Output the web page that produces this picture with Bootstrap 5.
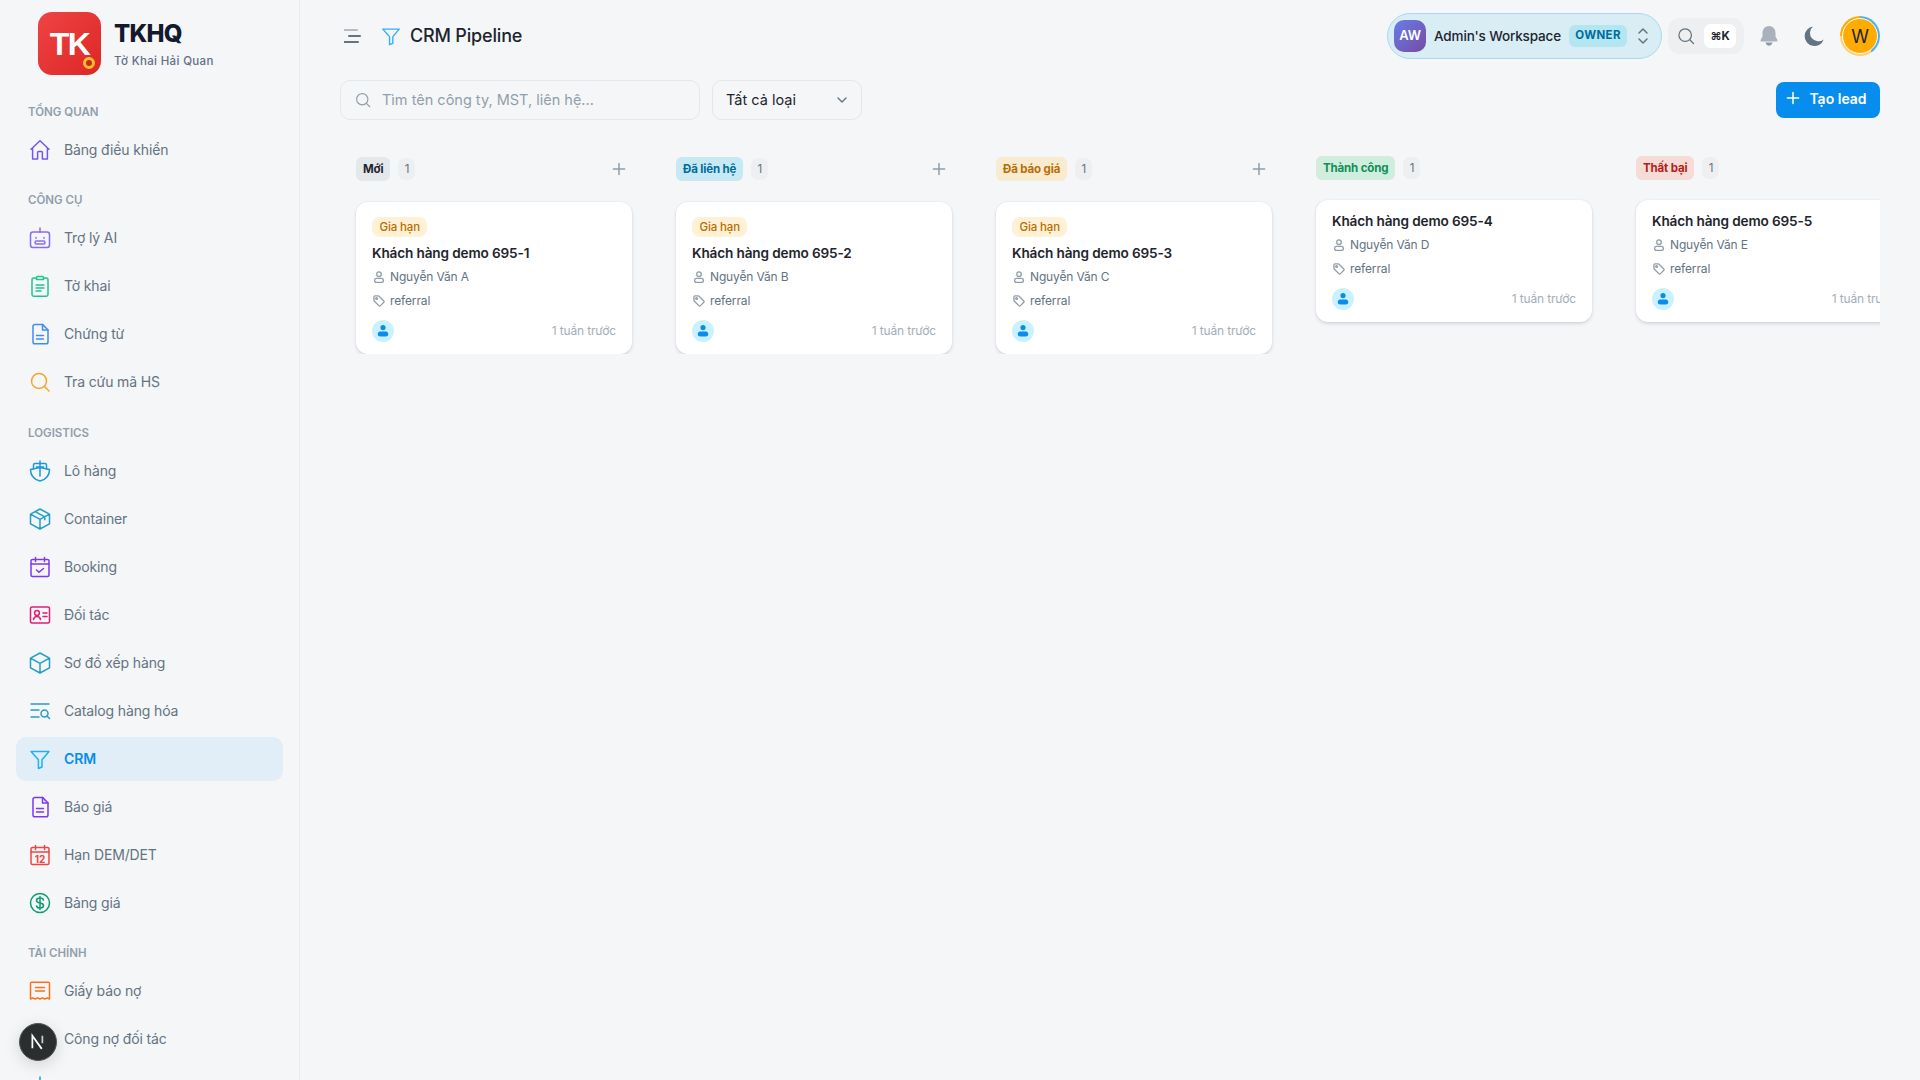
<!DOCTYPE html>
<html lang="vi">
<head>
<meta charset="utf-8">
<title>CRM Pipeline</title>
<link rel="stylesheet" href="https://cdn.jsdelivr.net/npm/bootstrap@5.3.0/dist/css/bootstrap.min.css">
<style>
    html, body { height: 100%; }
    body {
        font-family: Inter, "Noto Sans", sans-serif;
        background: #f5f6f8;
        color: #1c252e;
        font-size: 14px;
        overflow: hidden;
        letter-spacing: -0.01em;
    }
    .app-shell { height: 1080px; }
    .side-bar {
        width: 300px;
        border-right: 1px solid #e9ecef;
        height: 1080px;
        overflow: hidden;
    }
    .brand-row { height: 83.7px; padding: 12px 0 0 38px; gap: 13px; }
    .brand-logo {
        position: relative;
        width: 63px; height: 63px;
        border-radius: 14px;
        background: linear-gradient(135deg, #ef4444, #dc2626);
        color: #fff;
        font: 700 32px/65px "Liberation Sans", sans-serif;
        letter-spacing: -1.5px;
        text-align: center;
    }
    .brand-dot {
        position: absolute;
        right: 6px; bottom: 6px;
        width: 12px; height: 12px;
        border-radius: 50%;
        background: #c62828;
        border: 3.5px solid #fbbf24;
    }
    .brand-name { font-size: 24px; font-weight: 800; color: #141a2e; line-height: 28px; margin-top: 8px; letter-spacing: -0.03em; }
    .brand-sub { font-size: 11.5px; color: #5f6f86; letter-spacing: 0.35px; margin-top: 5px; line-height: 16px; font-weight: 500; }
    .nav-label {
        font-size: 11.5px;
        font-weight: 600;
        color: #919eab;
        height: 20px;
        line-height: 20px;
        margin: 18px 0 6px 28px;
        text-transform: uppercase;
        letter-spacing: 0;
    }
    .nav-label.wide-top { margin-top: 19px; }
    .nav-row {
        display: flex;
        align-items: center;
        gap: 12px;
        height: 44px;
        margin: 0 16px 4px 16px;
        padding-left: 12px;
        border-radius: 10px;
        color: #637381;
        font-size: 14px;
        text-decoration: none;
    }
    .nav-row svg { width: 24px; height: 24px; flex: none; }
    .nav-row.is-active { background: #e1eef8; color: #078dee; font-weight: 600; }
    .ico { fill: none; stroke: currentColor; stroke-width: 1.5; stroke-linecap: round; stroke-linejoin: round; }

    .next-badge {
        position: absolute;
        left: 19px; top: 1023px;
        width: 38px; height: 38px;
        border-radius: 50%;
        background: #2b2e2e;
        border: 1px solid #555;
        box-shadow: 0 4px 16px rgba(0,0,0,.14);
        color: #fff;
    }

    .work-area { min-width: 0; padding: 0 40px; }
    .top-bar { height: 72px; }
    .page-title { font-size: 18px; font-weight: 500; margin: 0; letter-spacing: -0.01em; color: #1c252e; }
    .ws-pill {
        height: 46px;
        width: 275px;
        padding: 0 12px 0 6px;
        border-radius: 23px;
        background: #d9edf5;
        border: 1px solid #a3daf3;
    }
    .ws-avatar {
        width: 32px; height: 32px;
        border-radius: 10px;
        background: linear-gradient(135deg, #667eea, #764ba2);
        color: #fff;
        font-size: 13px;
        font-weight: 600;
    }
    .ws-name { font-size: 13.5px; font-weight: 500; margin-left: 8px; }
    .ws-role {
        margin-left: 8px;
        width: 58px; height: 22px;
        border-radius: 6px;
        background: #b4e6f1;
        color: #006c9c;
        font-size: 11.5px;
        font-weight: 700;
        letter-spacing: 0.03em;
    }
    .cmd-box { width: 76px; height: 36px; border-radius: 12px; background: #edeff1; margin-left: 6px; padding: 0 8px 0 8px; }
    .cmd-key {
        width: 32px; height: 24px;
        border-radius: 7px;
        background: #fff;
        font: 700 11.5px/24px Inter, sans-serif;
        text-align: center;
        color: #1c252e;
    }
    .user-ring {
        width: 40px; height: 40px;
        border-radius: 50%;
        padding: 2px;
        background: conic-gradient(#4fb3f0 0 40%, #ffd27a 40% 75%, #ffab00 75% 100%);
    }
    .user-face {
        width: 100%; height: 100%;
        border-radius: 50%;
        background: #ffab00;
        border: 1px solid #fff;
        color: #1c252e;
        font-size: 18px;
    }
    .tool-row { height: 40px; margin-top: 8px; }
    .find-box {
        width: 360px; height: 40px;
        border: 1px solid #e3e7eb;
        border-radius: 10px;
        padding: 0 13px;
        gap: 10px;
        color: #919eab;
        font-size: 14.5px;
        letter-spacing: 0;
    }
    .kind-box {
        width: 150px; height: 40px;
        margin-left: 12px;
        border: 1px solid #e3e7eb;
        border-radius: 10px;
        padding: 0 12px 0 13px;
        font-size: 14.5px;
        letter-spacing: 0;
        color: #1c252e;
    }
    .add-lead {
        width: 104px; height: 36px;
        border-radius: 8px;
        background: #078dee;
        border: 0;
        color: #fff;
        font-size: 14px;
        font-weight: 600;
    }
    .add-lead:hover { background: #0379d0; color: #fff; }

    .board { gap: 44px; padding: 35px 0 0 16px; overflow: hidden; }
    .stage { width: 276px; flex: none; }
    .stage-head { min-height: 26px; margin-bottom: 19px; gap: 8px; }
    .stage-tag {
        height: 24px;
        padding: 0 7px;
        border-radius: 6px;
        font-size: 11.5px;
        font-weight: 700;
        line-height: 24px;
    }
    .stage-num {
        width: 17px; height: 22px;
        border-radius: 7px;
        background: #edeff1;
        color: #637381;
        font-size: 11.5px;
        text-align: center;
        line-height: 22px;
    }
    .stage-add { width: 28px; height: 28px; color: #919eab; margin-right: -1px; }
    .tag-grey { background: #e5e8eb; color: #1c252e; }
    .tag-blue { background: #c6e9f4; color: #006c9c; }
    .tag-amber { background: #f9ebd0; color: #b76e00; }
    .tag-green { background: #d0eedd; color: #118d57; }
    .tag-red { background: #f6dcd7; color: #b71d18; }

    .lead-card {
        background: #fff;
        border-radius: 12px;
        padding: 12px 16px;
        box-shadow: 0 0 2px rgba(145,158,171,.2), 0 2px 4px -1px rgba(145,158,171,.45);
    }
    .lead-kind {
        display: inline-block;
        height: 20px;
        padding: 0 7.5px;
        margin: 3px 0 7px;
        border-radius: 8px;
        background: #fff1d6;
        color: #b76e00;
        font-size: 11.5px;
        font-weight: 500;
        line-height: 20px;
        vertical-align: top;
    }
    .lead-title { font-size: 13.6px; font-weight: 600; line-height: 18px; color: #1c252e; margin: 0 0 3px; }
    .lead-meta { height: 24px; gap: 4px; font-size: 12px; color: #637381; }
    .lead-meta svg { width: 14px; height: 14px; color: #919eab; flex: none; }
    .lead-foot { margin-top: 7px; }
    .lead-owner { width: 22px; height: 22px; border-radius: 50%; background: #caf1ff; }
    .lead-time { font-size: 12px; color: #a3aeb9; }
</style>
</head>
<body>
<svg width="0" height="0" class="position-absolute">
    <symbol id="i-user" viewBox="0 0 16 16"><circle cx="8" cy="4.8" r="2.6" class="ico" stroke-width="1"/><rect x="3" y="9.6" width="10" height="4.6" rx="2.3" class="ico" stroke-width="1"/></symbol>
    <symbol id="i-tag" viewBox="0 0 16 16"><path class="ico" stroke-width="1" d="M2.2 7V3.4c0-.7.5-1.2 1.2-1.2H7c.4 0 .7.1 1 .4l5.3 5.2c.6.6.6 1.3 0 1.9l-3.6 3.6c-.6.6-1.3.6-1.9 0L2.6 8c-.3-.3-.4-.6-.4-1z"/><circle cx="5.2" cy="5.2" r="1" class="ico" stroke-width="1"/></symbol>
    <symbol id="i-person" viewBox="0 0 22 22"><circle cx="11" cy="7.6" r="2.6" fill="#078dee"/><rect x="5.8" y="11.6" width="10.4" height="5" rx="2.5" fill="#078dee"/></symbol>
    <symbol id="i-plus" viewBox="0 0 16 16"><path d="M8 2.4v11.2M2.4 8h11.2" fill="none" stroke="currentColor" stroke-width="1.5" stroke-linecap="round"/></symbol>
    <symbol id="i-funnel" viewBox="0 0 24 24"><path class="ico" d="M3 4.5h18l-7 8.2V20l-3.6 1.5v-8.8z"/></symbol>
    <symbol id="i-search" viewBox="0 0 24 24"><circle cx="11" cy="11" r="7.5" class="ico"/><path class="ico" d="M16.5 16.5 21 21"/></symbol>
    <symbol id="i-doc" viewBox="0 0 24 24"><path class="ico" d="M5 4.2C5 3 5.8 2.4 7 2.4h7.5L20 8v12c0 1-.8 1.8-1.8 1.8H6.8C5.8 21.8 5 21 5 20z"/><path class="ico" d="M14.5 2.4V8H20M8.5 13.5h7M8.5 17h7"/></symbol>
</svg>

<div class="app-shell d-flex">
    <aside class="side-bar flex-shrink-0">
        <div class="brand-row d-flex align-items-start">
            <div class="brand-logo">TK<span class="brand-dot"></span></div>
            <div>
                <div class="brand-name">TKHQ</div>
                <div class="brand-sub">Tờ Khai Hải Quan</div>
            </div>
        </div>

        <div class="nav-label">Tổng quan</div>
        <a class="nav-row" href="#"><svg viewBox="0 0 24 24" style="color:#7357f0"><path class="ico" d="M3 11.2 12 2.8l9 8.4M4.6 9.8V21h5v-6.4c0-.6.4-1 1-1h2.8c.6 0 1 .4 1 1V21h5V9.8"/></svg>Bảng điều khiển</a>

        <div class="nav-label">Công cụ</div>
        <a class="nav-row" href="#"><svg viewBox="0 0 24 24" style="color:#8b6cf6"><rect x="2.5" y="6" width="19" height="15.5" rx="2.5" class="ico"/><path class="ico" d="M12 2v4M8 11.5v.8M16 11.5v.8"/><rect x="7" y="15" width="10" height="3" rx="1.5" class="ico"/></svg>Trợ lý AI</a>
        <a class="nav-row" href="#"><svg viewBox="0 0 24 24" style="color:#22c58b"><path class="ico" d="M8.5 4H5.6C4.7 4 4 4.7 4 5.6v15c0 .9.7 1.6 1.6 1.6h12.8c.9 0 1.6-.7 1.6-1.6v-15c0-.9-.7-1.6-1.6-1.6h-2.9"/><path class="ico" d="M8.5 3.8c0-.7.5-1.3 1.2-1.3h4.6c.7 0 1.2.6 1.2 1.3v1.7h-7zM8 11h8M8 14h8M8 17h5"/></svg>Tờ khai</a>
        <a class="nav-row" href="#"><svg viewBox="0 0 24 24" style="color:#3f8cf4"><use href="#i-doc"/></svg>Chứng từ</a>
        <a class="nav-row" href="#"><svg viewBox="0 0 24 24" style="color:#f5a524"><use href="#i-search"/></svg>Tra cứu mã HS</a>

        <div class="nav-label wide-top">Logistics</div>
        <a class="nav-row" href="#"><svg viewBox="0 0 24 24" style="color:#1b9ad6"><path class="ico" d="M5.5 10V6c0-.8.7-1.5 1.5-1.5h10c.8 0 1.5.7 1.5 1.5v4"/><path class="ico" d="M2.5 10.5 12 8.5l9.5 2c0 5-1.5 9.5-9.5 11.5-8-2-9.5-6.5-9.5-11.5zM12 2v15M8.5 8h7"/></svg>Lô hàng</a>
        <a class="nav-row" href="#"><svg viewBox="0 0 24 24" style="color:#22a0c4"><path class="ico" d="M12 2 21.5 7.200v9.600L12 22l-9.500-5.200V7.200zM2.500 7.200 12 12.400l9.500-5.200M12 12.400V22M7.200 4.600l9.600 5.200v3"/></svg>Container</a>
        <a class="nav-row" href="#"><svg viewBox="0 0 24 24" style="color:#7c3aed"><rect x="3" y="4.5" width="18" height="17" rx="1.5" class="ico"/><path class="ico" d="M3 9h18M7.5 2.5v4M16.5 2.5v4M8.5 15l2.5 2.300 4.500-3.800"/></svg>Booking</a>
        <a class="nav-row" href="#"><svg viewBox="0 0 24 24" style="color:#e11d74"><rect x="2.5" y="4" width="19" height="16" rx="1.5" class="ico"/><circle cx="9" cy="10" r="2.4" class="ico"/><path class="ico" d="M5.500 16.500c.4-2 1.800-3 3.500-3s3.100 1 3.500 3M15 10h4M15 13.500h4"/></svg>Đối tác</a>
        <a class="nav-row" href="#"><svg viewBox="0 0 24 24" style="color:#22a0c4"><path class="ico" d="M12 2 21.500 7.200v9.600L12 22l-9.500-5.200V7.200zM2.500 7.200 12 12.400l9.500-5.200M12 12.400V22"/></svg>Sơ đồ xếp hàng</a>
        <a class="nav-row" href="#"><svg viewBox="0 0 24 24" style="color:#2a9dc4"><path class="ico" d="M3 5h18M3 11h8M3 18h8"/><circle cx="16.5" cy="14.5" r="3.5" class="ico"/><path class="ico" d="m19 17 2.5 2.500"/></svg>Catalog hàng hóa</a>
        <a class="nav-row is-active" href="#"><svg viewBox="0 0 24 24" style="color:#1fb0f5"><use href="#i-funnel"/></svg>CRM</a>
        <a class="nav-row" href="#"><svg viewBox="0 0 24 24" style="color:#7c3aed"><use href="#i-doc"/></svg>Báo giá</a>
        <a class="nav-row" href="#"><svg viewBox="0 0 24 24" style="color:#ef4444"><rect x="3" y="4.5" width="18" height="17" rx="1.5" class="ico"/><path class="ico" d="M3 9h18M7.5 2.5v4M16.5 2.5v4"/><text x="12" y="19.5" text-anchor="middle" font-size="10" font-weight="700" fill="currentColor" font-family="Inter, sans-serif">12</text></svg>Hạn DEM/DET</a>
        <a class="nav-row" href="#"><svg viewBox="0 0 24 24" style="color:#0f9d6e"><circle cx="12" cy="12" r="9.5" class="ico"/><path class="ico" d="M15.5 9c-.3-1.200-1.700-2-3.500-2-2 0-3.500 1-3.500 2.500S10 11.700 12 12c2 .3 3.500 1 3.500 2.500S14 17 12 17c-1.800 0-3.200-.8-3.500-2M12 5.500v13"/></svg>Bảng giá</a>

        <div class="nav-label">Tài chính</div>
        <a class="nav-row" href="#"><svg viewBox="0 0 24 24" style="color:#f97316"><path class="ico" d="M2.5 4.200c0-.6.400-1 1-1h17c.6 0 1 .4 1 1V20l-2.400-1.200-2.400 1.200-2.300-1.200-2.400 1.200-2.400-1.200L7.300 20l-2.400-1.200L2.500 20zM7.500 8.500h9M7.500 12h9"/></svg>Giấy báo nợ</a>
        <a class="nav-row" href="#"><span style="width:24px"></span>Công nợ đối tác</a>
        <a class="nav-row" href="#"><svg viewBox="0 0 24 24" style="color:#22a0c4"><path class="ico" d="M12 2v20M6 8v14M18 12v10"/></svg></a>
    </aside>

    <main class="work-area flex-grow-1">
        <div class="top-bar d-flex align-items-center justify-content-between">
            <div class="d-flex align-items-center">
                <svg width="18" height="16" viewBox="0 0 18 16" class="ms-1"><path d="M0 2h13" stroke="#b4bcc5" stroke-width="2" stroke-linecap="round"/><path d="M5 8h11" stroke="#637381" stroke-width="2" stroke-linecap="round"/><path d="M0 14h14" stroke="#637381" stroke-width="2" stroke-linecap="round"/></svg>
                <svg width="22" height="22" style="color:#2db2f3; margin:0 8px 0 18px"><use href="#i-funnel"/></svg>
                <h1 class="page-title">CRM Pipeline</h1>
            </div>
            <div class="d-flex align-items-center">
                <div class="ws-pill d-flex align-items-center">
                    <div class="ws-avatar d-flex align-items-center justify-content-center">AW</div>
                    <span class="ws-name">Admin's Workspace</span>
                    <span class="ws-role d-flex align-items-center justify-content-center">OWNER</span>
                    <svg width="12" height="20" viewBox="0 0 12 20" class="ms-auto" fill="none" stroke="#637381" stroke-width="1.500" stroke-linecap="round" stroke-linejoin="round"><path d="m2 7 4-4 4 4M2 13l4 4 4-4"/></svg>
                </div>
                <div class="cmd-box d-flex align-items-center justify-content-between">
                    <svg width="20" height="20" style="color:#637381"><use href="#i-search"/></svg>
                    <span class="cmd-key">⌘K</span>
                </div>
                <svg width="22" height="24" viewBox="0 0 22 24" style="margin:0 0 0 14px"><path fill="#a9b2bb" d="M11 2c3.900 0 6.500 3 6.500 7v3.500l1.800 3.200c.5.900 0 1.800-1 1.800H3.700c-1 0-1.500-.9-1-1.800l1.800-3.200V9c0-4 2.600-7 6.500-7z"/><path fill="#8f99a4" d="M7.500 18.500h7c-.4 2-1.800 3.200-3.500 3.200s-3.100-1.200-3.500-3.200z"/></svg>
                <svg width="24" height="24" viewBox="0 0 24 24" style="margin:0 0 0 22px"><path fill="#637381" d="M11 2.500a9.800 9.800 0 1 0 10.700 12.900A8.300 8.300 0 0 1 11 2.500z"/></svg>
                <div class="user-ring" style="margin-left:14px">
                    <div class="user-face d-flex align-items-center justify-content-center">W</div>
                </div>
            </div>
        </div>

        <div class="tool-row d-flex align-items-center">
            <div class="find-box d-flex align-items-center">
                <svg width="18" height="18" style="color:#919eab"><use href="#i-search"/></svg>
                <span>Tìm tên công ty, MST, liên hệ...</span>
            </div>
            <div class="kind-box d-flex align-items-center justify-content-between">
                <span>Tất cả loại</span>
                <svg width="14" height="14" viewBox="0 0 14 14" fill="none" stroke="#637381" stroke-width="1.400" stroke-linecap="round" stroke-linejoin="round"><path d="m3 5 4 4 4-4"/></svg>
            </div>
            <button class="btn add-lead ms-auto d-flex align-items-center justify-content-center gap-2 pt-0 ps-0 pe-1 pb-1" type="button">
                <svg width="16" height="16"><use href="#i-plus"/></svg>Tạo lead
            </button>
        </div>

        <div class="board d-flex">
            <section class="stage">
                <div class="stage-head d-flex align-items-center">
                    <span class="stage-tag tag-grey">Mới</span><span class="stage-num">1</span>
                    <span class="stage-add ms-auto d-flex align-items-center justify-content-center"><svg width="16" height="16"><use href="#i-plus"/></svg></span>
                </div>
                <article class="lead-card">
                    <span class="lead-kind">Gia hạn</span>
                    <div class="lead-title">Khách hàng demo 695-1</div>
                    <div class="lead-meta d-flex align-items-center"><svg><use href="#i-user"/></svg>Nguyễn Văn A</div>
                    <div class="lead-meta d-flex align-items-center"><svg><use href="#i-tag"/></svg>referral</div>
                    <div class="lead-foot d-flex align-items-center justify-content-between">
                        <svg class="lead-owner"><use href="#i-person"/></svg><span class="lead-time">1 tuần trước</span>
                    </div>
                </article>
            </section>
            <section class="stage">
                <div class="stage-head d-flex align-items-center">
                    <span class="stage-tag tag-blue">Đã liên hệ</span><span class="stage-num">1</span>
                    <span class="stage-add ms-auto d-flex align-items-center justify-content-center"><svg width="16" height="16"><use href="#i-plus"/></svg></span>
                </div>
                <article class="lead-card">
                    <span class="lead-kind">Gia hạn</span>
                    <div class="lead-title">Khách hàng demo 695-2</div>
                    <div class="lead-meta d-flex align-items-center"><svg><use href="#i-user"/></svg>Nguyễn Văn B</div>
                    <div class="lead-meta d-flex align-items-center"><svg><use href="#i-tag"/></svg>referral</div>
                    <div class="lead-foot d-flex align-items-center justify-content-between">
                        <svg class="lead-owner"><use href="#i-person"/></svg><span class="lead-time">1 tuần trước</span>
                    </div>
                </article>
            </section>
            <section class="stage">
                <div class="stage-head d-flex align-items-center">
                    <span class="stage-tag tag-amber">Đã báo giá</span><span class="stage-num">1</span>
                    <span class="stage-add ms-auto d-flex align-items-center justify-content-center"><svg width="16" height="16"><use href="#i-plus"/></svg></span>
                </div>
                <article class="lead-card">
                    <span class="lead-kind">Gia hạn</span>
                    <div class="lead-title">Khách hàng demo 695-3</div>
                    <div class="lead-meta d-flex align-items-center"><svg><use href="#i-user"/></svg>Nguyễn Văn C</div>
                    <div class="lead-meta d-flex align-items-center"><svg><use href="#i-tag"/></svg>referral</div>
                    <div class="lead-foot d-flex align-items-center justify-content-between">
                        <svg class="lead-owner"><use href="#i-person"/></svg><span class="lead-time">1 tuần trước</span>
                    </div>
                </article>
            </section>
            <section class="stage">
                <div class="stage-head d-flex align-items-center">
                    <span class="stage-tag tag-green">Thành công</span><span class="stage-num">1</span>
                </div>
                <article class="lead-card">
                    <div class="lead-title">Khách hàng demo 695-4</div>
                    <div class="lead-meta d-flex align-items-center"><svg><use href="#i-user"/></svg>Nguyễn Văn D</div>
                    <div class="lead-meta d-flex align-items-center"><svg><use href="#i-tag"/></svg>referral</div>
                    <div class="lead-foot d-flex align-items-center justify-content-between">
                        <svg class="lead-owner"><use href="#i-person"/></svg><span class="lead-time">1 tuần trước</span>
                    </div>
                </article>
            </section>
            <section class="stage">
                <div class="stage-head d-flex align-items-center">
                    <span class="stage-tag tag-red">Thất bại</span><span class="stage-num">1</span>
                </div>
                <article class="lead-card">
                    <div class="lead-title">Khách hàng demo 695-5</div>
                    <div class="lead-meta d-flex align-items-center"><svg><use href="#i-user"/></svg>Nguyễn Văn E</div>
                    <div class="lead-meta d-flex align-items-center"><svg><use href="#i-tag"/></svg>referral</div>
                    <div class="lead-foot d-flex align-items-center justify-content-between">
                        <svg class="lead-owner"><use href="#i-person"/></svg><span class="lead-time">1 tuần trước</span>
                    </div>
                </article>
            </section>
        </div>
    </main>
</div>

<div class="next-badge d-flex align-items-center justify-content-center">
    <svg width="20" height="20" viewBox="0 0 16 16"><path d="M3.500 13V3l7.500 10.500" fill="none" stroke="#fff" stroke-width="1.400"/><path d="M11.500 3v6" stroke="#ccc" stroke-width="1.400"/></svg>
</div>

<script src="https://cdn.jsdelivr.net/npm/bootstrap@5.3.0/dist/js/bootstrap.bundle.min.js"></script>
</body>
</html>
